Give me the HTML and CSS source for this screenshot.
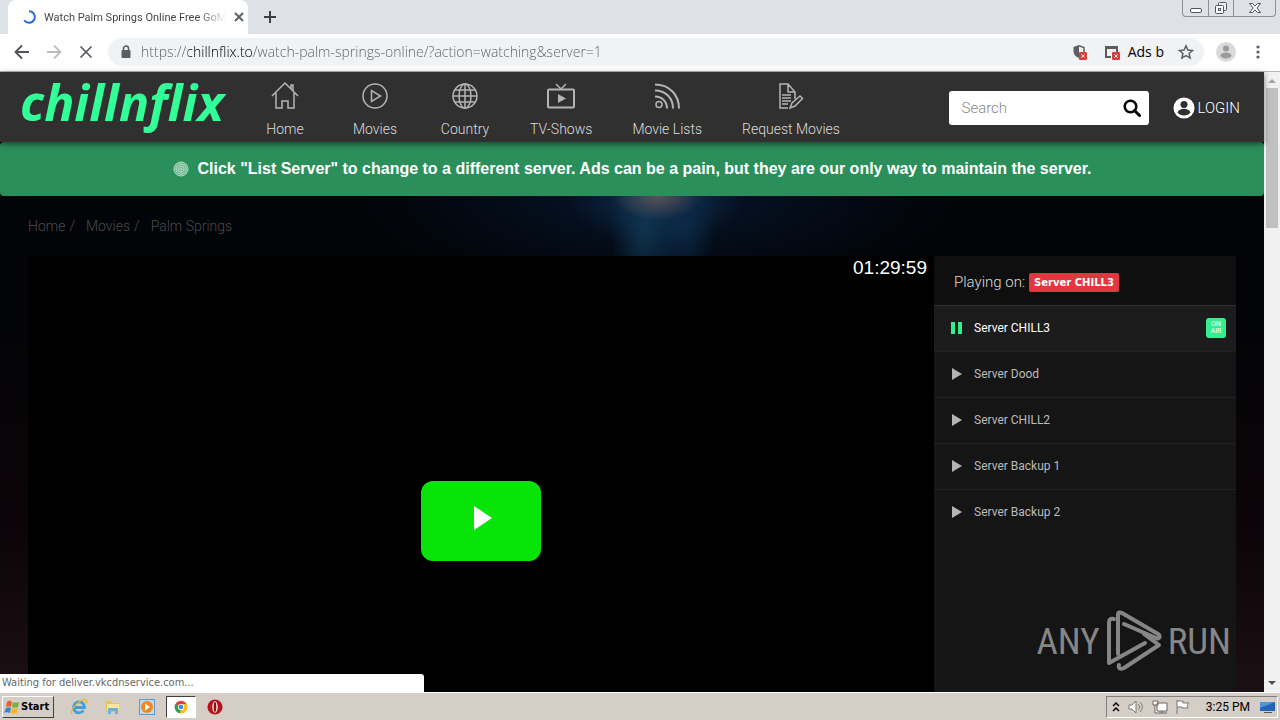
FILE: index.html
```html
<!DOCTYPE html>
<html lang="en">
<head>
  <meta charset="UTF-8" />
  <meta name="viewport" content="width=device-width, initial-scale=1.0"/>
  <title>Watch Palm Springs Online Free</title>
  <link rel="stylesheet" href="styles.css">
</head>
<body>

  <!-- browser tabs -->
  <div class="tabstrip">
    <div class="tab">
      <svg class="spinner" viewBox="0 0 14 14" width="14" height="14"><path d="M7 1.2A5.8 5.8 0 1 1 2.2 10.3" fill="none" stroke="#2b6de0" stroke-width="2"/></svg>
      <span class="tab-title">Watch Palm Springs Online Free GoM</span>
      <button class="icon-btn" aria-label="Close tab"><svg viewBox="0 0 10 10" width="10" height="10"><path d="M1 1l8 8M9 1l-8 8" stroke="#5f6368" stroke-width="2"/></svg></button>
    </div>
    <button class="icon-btn new-tab" aria-label="New tab"><svg viewBox="0 0 12 12" width="12" height="12"><path d="M6 0v12M0 6h12" stroke="#3c4043" stroke-width="2"/></svg></button>
    <div class="window-controls">
      <button aria-label="Minimize"><svg viewBox="0 0 14 14" width="14" height="14"><rect x="1.5" y="7.5" width="11" height="4" rx="1.5" fill="#fff" stroke="#50555e"/></svg></button>
      <button aria-label="Restore"><svg viewBox="0 0 14 14" width="14" height="14"><rect x="4.5" y="1.5" width="8" height="8" rx="1" fill="#eee" stroke="#50555e"/><rect x="1.5" y="4.5" width="8" height="8" rx="1" fill="#fff" stroke="#50555e"/><rect x="4.5" y="7.5" width="2" height="2" fill="none" stroke="#50555e"/></svg></button>
      <button class="wide" aria-label="Close"><svg viewBox="0 0 14 14" width="14" height="14"><path d="M1.5 2.500h3L7 5l2.500-2.500h3L9 7l3.500 4.500h-3L7 9l-2.500 2.500h-3L5 7z" fill="#fff" stroke="#50555e"/></svg></button>
    </div>
  </div>

  <!-- address bar -->
  <div class="toolbar">
    <button class="icon-btn" aria-label="Back"><svg viewBox="0 0 16 16" width="16" height="16"><path d="M15 8H2M8 1.500L1.500 8 8 14.500" fill="none" stroke="#50545a" stroke-width="1.800"/></svg></button>
    <button class="icon-btn" aria-label="Forward"><svg viewBox="0 0 16 16" width="16" height="16"><path d="M1 8h13M8 1.500L14.500 8 8 14.500" fill="none" stroke="#bcbec1" stroke-width="1.800"/></svg></button>
    <button class="icon-btn" aria-label="Stop"><svg viewBox="0 0 16 16" width="16" height="16"><path d="M2.500 2.500l11 11M13.500 2.500l-11 11" stroke="#50545a" stroke-width="1.600"/></svg></button>
    <div class="omnibox">
      <svg viewBox="0 0 10 13" width="10" height="13"><rect x="0.500" y="5" width="9" height="8" rx="1" fill="#5a5e63"/><path d="M2.500 5.500V3.500a2.500 2.500 0 0 1 5 0v2" fill="none" stroke="#5a5e63" stroke-width="1.500"/></svg>
      <input class="url" type="text" aria-label="Address" value="https://chillnflix.to/watch-palm-springs-online/?action=watching&amp;server=1">
      <svg viewBox="0 0 16 16" width="16" height="16"><path d="M7 1L1.500 3v4c0 3.500 2.500 6 5.500 7z" fill="#5a5e63"/><path d="M7 1.800L12 3.500V8" fill="none" stroke="#5a5e63" stroke-width="1.500"/><rect x="7" y="8" width="8" height="8" rx="1" fill="#d93f3a"/><path d="M9.500 10.500l3 3M12.500 10.500l-3 3" stroke="#fff"/></svg>
      <svg class="popup-icon" viewBox="0 0 16 16" width="16" height="16"><path d="M7 13H2V3h11v5" fill="none" stroke="#5a5e63" stroke-width="2"/><path d="M1 2h13v3H1z" fill="#5a5e63"/><rect x="8" y="8" width="8" height="8" rx="1" fill="#d93f3a"/><path d="M10.500 10.500l3 3M13.500 10.500l-3 3" stroke="#fff"/></svg>
      <span class="ads">Ads b</span>
      <button class="icon-btn" aria-label="Bookmark"><svg viewBox="0 0 16 16" width="16" height="16"><path d="M8 1.800l1.900 4.200 4.600.5-3.400 3 1 4.600L8 11.700l-4.100 2.400 1-4.600-3.400-3L6.100 6z" fill="none" stroke="#5a5e63" stroke-width="1.500"/></svg></button>
    </div>
    <button class="icon-btn" aria-label="Profile"><svg viewBox="0 0 20 20" width="20" height="20"><circle cx="10" cy="10" r="10" fill="#dadada"/><circle cx="10" cy="6.500" r="3" fill="#9a9a9a"/><ellipse cx="10" cy="13.500" rx="5.500" ry="3" fill="#9a9a9a"/></svg></button>
    <button class="icon-btn menu" aria-label="Menu"><svg viewBox="0 0 4 14" width="4" height="14" fill="#5a5e63"><circle cx="2" cy="2" r="1.600"/><circle cx="2" cy="7" r="1.600"/><circle cx="2" cy="12" r="1.600"/></svg></button>
  </div>

  <div class="viewport">
    <div class="page">
      <header>
        <a class="logo" href="#">chillnflix</a>
        <nav>
          <a href="#">
            <svg viewBox="0 0 28 28" width="28" height="28"><path d="M1 15L14 2l13 13M5 12v15h6v-7h6v7h6V12M20 8V4h2v6"/></svg>
            <span>Home</span>
          </a>
          <a href="#">
            <svg viewBox="0 0 28 28" width="28" height="28"><circle cx="14" cy="15" r="12"/><path d="M10.500 9.500v11l9-5.500z"/></svg>
            <span>Movies</span>
          </a>
          <a href="#">
            <svg viewBox="0 0 28 28" width="28" height="28"><circle cx="14" cy="15" r="12"/><ellipse cx="14" cy="15" rx="6" ry="12"/><path d="M14 3v24M2 15h24M4 9h20M4 21h20"/></svg>
            <span>Country</span>
          </a>
          <a href="#">
            <svg viewBox="0 0 28 28" width="28" height="28"><rect x="1" y="8.500" width="26" height="18" rx="1" stroke-width="2"/><path d="M14 8L9 3M14 8l5-5"/><path class="solid" d="M11 13v9l8-4.500z"/></svg>
            <span>TV-Shows</span>
          </a>
          <a href="#">
            <svg viewBox="0 0 28 28" width="28" height="28"><circle cx="6" cy="23.500" r="3"/><path d="M2 15.500c7 0 12 5 12 12M2 9.500c10.500 0 18 7.500 18 18M2 3.500c14 0 24 10 24 24" stroke-width="2"/></svg>
            <span>Movie Lists</span>
          </a>
          <a href="#">
            <svg viewBox="0 0 28 28" width="28" height="28"><path d="M11 27H3V3h8l7 8v7M11 3v8h7M5 14h9M5 17h9M5 20h9M5 23h6M13 27l2-5 8-7 2.500 2.500-7.500 7.500z"/></svg>
            <span>Request Movies</span>
          </a>
        </nav>
        <form class="search">
          <input type="search" placeholder="Search" aria-label="Search">
          <button type="button" aria-label="Search"><svg viewBox="0 0 18 18" width="18" height="18"><circle cx="7.500" cy="7.500" r="5.800" fill="none" stroke="#000" stroke-width="2.500"/><path d="M11.500 11.500l5 5" stroke="#000" stroke-width="3" stroke-linecap="round"/></svg></button>
        </form>
        <a class="login" href="#">
          <svg viewBox="0 0 22 22" width="22" height="22"><circle cx="11" cy="11" r="10.500" fill="#fff"/><circle cx="11" cy="7.500" r="3.500" fill="#303030"/><path d="M4.500 15.500c2-5 11-5 13 0-3 4-10 4-13 0z" fill="#303030"/></svg>
          <span>LOGIN</span>
        </a>
      </header>

      <div class="notice">
        <svg viewBox="0 0 16 16" width="16" height="16" fill="#6db590" stroke="#b3dec5"><circle cx="8" cy="8" r="7"/><circle cx="8" cy="8" r="5"/><circle cx="8" cy="8" r="3"/><circle cx="8" cy="8" r="1"/></svg>
        <span>Click "List Server" to change to a different server. Ads can be a pain, but they are our only way to maintain the server.</span>
      </div>

      <div class="content">
        <div class="breadcrumb">
          <a href="#">Home</a><span>/</span>
          <a href="#">Movies</a><span>/</span>
          <a href="#">Palm Springs</a>
        </div>

        <main>
          <div class="player">
            <span class="time">01:29:59</span>
            <button class="play" aria-label="Play"><svg viewBox="0 0 20 24" width="20" height="24"><path d="M1 0v24l18-12z" fill="#fff"/></svg></button>
          </div>

          <aside>
            <div class="playing">Playing on: <span class="badge">Server CHILL3</span></div>
            <ul class="servers">
              <li class="active">
                <a href="#"><svg viewBox="0 0 12 12" width="12" height="12"><path d="M0 0h4v12H0zM7 0h4v12H7z"/></svg><span>Server CHILL3</span></a>
                <span class="on-air">ON<br>AIR</span>
              </li>
              <li><a href="#"><svg viewBox="0 0 12 12" width="12" height="12"><path d="M1 0v12l10-6z"/></svg><span>Server Dood</span></a></li>
              <li><a href="#"><svg viewBox="0 0 12 12" width="12" height="12"><path d="M1 0v12l10-6z"/></svg><span>Server CHILL2</span></a></li>
              <li><a href="#"><svg viewBox="0 0 12 12" width="12" height="12"><path d="M1 0v12l10-6z"/></svg><span>Server Backup 1</span></a></li>
              <li><a href="#"><svg viewBox="0 0 12 12" width="12" height="12"><path d="M1 0v12l10-6z"/></svg><span>Server Backup 2</span></a></li>
            </ul>
          </aside>
        </main>
      </div>
    </div>

    <div class="scrollbar">
      <svg viewBox="0 0 16 16" width="16" height="16"><path d="M4 11l4-4 4 4z" fill="#a3a3a3"/></svg>
      <div class="thumb"></div>
      <svg class="down" viewBox="0 0 16 16" width="16" height="16"><path d="M4 5l4 4 4-4z" fill="#505050"/></svg>
    </div>

    <div class="status">Waiting for deliver.vkcdnservice.com...</div>

    <div class="watermark">
      <span>ANY</span>
      <svg viewBox="0 0 56 62" width="56" height="62" fill="none" stroke="#868686" stroke-width="4" stroke-linejoin="round" stroke-linecap="round"><path d="M12 44V5c0-3 2-3 4-2l36 21c3 2 1 6-2 4L18 14"/><path d="M8 9c-4-1-5 1-5 4v40l36-20"/><path d="M38 24l15 11L18 58c-4 2-6 0-5-3"/></svg>
      <span>RUN</span>
    </div>
  </div>

  <!-- taskbar -->
  <footer class="taskbar">
    <button class="start">
      <svg viewBox="0 0 16 16" width="16" height="16"><path d="M3 3c2-2 4-1 5 0L7 8C5 7 4 7 2 8z" fill="#e8612c"/><path d="M9 3c2 1 4 1 6 0l-1 5c-2 1-4 1-6 0z" fill="#76b041"/><path d="M2 9c2-1 3-1 5 0l-1 5c-2-1-4-1-6 0z" fill="#3c86d8"/><path d="M8 9c2 1 4 1 6 0l-1 5c-2 1-4 1-6 0z" fill="#f6b81c"/></svg>
      <span>Start</span>
    </button>
    <button class="task" aria-label="Internet Explorer"><svg viewBox="0 0 18 18" width="18" height="18"><path d="M13.500 12.500A5.500 5.500 0 1 1 14.500 9.500H5" fill="none" stroke="#3ba0e2" stroke-width="2.800"/><path d="M2 16C-1 11 12 0 16 2c1 .5 1 2 0 3" fill="none" stroke="#e8b730" stroke-width="1.300"/></svg></button>
    <button class="task" aria-label="Explorer"><svg viewBox="0 0 18 18" width="18" height="18"><path d="M2 3h5l1 2h7v9H2z" fill="#e8c35c"/><path d="M3 6h12v7H3z" fill="#f8e6a0"/><path d="M4 16v-6h10v6h-3v-3H7v3z" fill="#68b2dc"/></svg></button>
    <button class="task" aria-label="Media Player"><svg viewBox="0 0 18 18" width="18" height="18"><rect x="1.500" y="1.500" width="15" height="15" fill="#b9dcf4" stroke="#5b9bce"/><circle cx="9" cy="9" r="6" fill="#f08a1c"/><path d="M7 5.500v7l5-3.500z" fill="#fff"/></svg></button>
    <button class="task running" aria-label="Chrome"><svg viewBox="0 0 18 18" width="14" height="14"><circle cx="9" cy="9" r="8" fill="#e34133"/><path d="M9 9L2 5a8 8 0 0 0 6 12z" fill="#2ba24c"/><path d="M9 9h8a8 8 0 0 1-9 8z" fill="#fbc116"/><path d="M9 5h7a8 8 0 0 1-8 12l4-6z" fill="#fbc116"/><circle cx="9" cy="9" r="4" fill="#fff"/><circle cx="9" cy="9" r="3" fill="#4285f4"/></svg></button>
    <button class="task" aria-label="Opera"><svg viewBox="0 0 18 18" width="16" height="16"><circle cx="9" cy="9" r="8.500" fill="#b5161c"/><ellipse cx="9" cy="9" rx="3" ry="6.500" fill="#fff"/><ellipse cx="9" cy="9" rx="1.500" ry="5.500" fill="#8a1015"/></svg></button>
    <div class="tray">
      <svg viewBox="0 0 8 12" width="8" height="12" fill="none" stroke="#000" stroke-width="1.500"><path d="M1 5l3-3 3 3M1 10l3-3 3 3"/></svg>
      <svg viewBox="0 0 18 16" width="18" height="16" fill="#fff" stroke="#777"><path d="M2 6h3l4-4v12l-4-4H2z"/><path d="M11 5c2 2 2 4 0 6M13 3c3 3 3 7 0 10" fill="none"/></svg>
      <svg viewBox="0 0 16 16" width="16" height="16" fill="#fff" stroke="#666"><path d="M5 4h10v8H5zM7 14h8M10 12v2M1 2h5v4H1zM3 6v8h4"/></svg>
      <svg viewBox="0 0 16 16" width="16" height="16" fill="#fff" stroke="#777"><path d="M2 1v14M2 2h6v2h6l-2 3 1 2H7V8H2"/></svg>
      <span class="clock">3:25 PM</span>
      <svg viewBox="0 0 16 16" width="16" height="16"><path d="M1 3h15v9H1z" fill="#2464b8"/><path d="M1 3h15L1 9z" fill="#4d94dd"/><path d="M5 13h8v1H5z" fill="#555"/></svg>
    </div>
  </footer>

</body>
</html>
```
FILE: styles.css
```css
* {
  box-sizing: border-box;
}
body {
  margin: 0;
  height: 100vh;
  display: flex;
  flex-direction: column;
  overflow: hidden;
  font-family: Roboto, "Liberation Sans", sans-serif;
  font-size: 14px;
}
a {
  color: inherit;
  text-decoration: none;
}
svg {
  display: block;
  flex: none;
}
button {
  font: inherit;
  padding: 0;
  border: none;
  background: none;
}
.icon-btn {
  display: flex;
  align-items: center;
}

/* browser */
.tabstrip {
  display: flex;
  height: 34px;
  padding-left: 8px;
  background: #dee1e6;
}
.tab {
  display: flex;
  align-items: center;
  gap: 8px;
  width: 240px;
  padding: 0 11px 0 14px;
  background: #fff;
  border-radius: 8px 8px 0 0;
}
.tab-title {
  flex: 1;
  white-space: nowrap;
  font-size: 11px;
  color: transparent;
  background: linear-gradient(to right, #3c4043 85%, #fff);
  -webkit-background-clip: text;
  background-clip: text;
}
.new-tab {
  margin-left: 16px;
}
.window-controls {
  display: flex;
  height: 17px;
  margin: 0 4px 0 auto;
  border: 1px solid #8b9099;
  border-top: none;
  border-radius: 0 0 4px 4px;
}
.window-controls button {
  display: flex;
  align-items: center;
  justify-content: center;
  width: 25px;
}
.window-controls button + button {
  border-left: 1px solid #8b9099;
}
.window-controls .wide {
  width: 42px;
}
.toolbar {
  display: flex;
  align-items: center;
  gap: 16px;
  height: 38px;
  padding: 0 20px 2px 14px;
  background: #fff;
  border-bottom: 1px solid #b5b5b5;
}
.omnibox {
  display: flex;
  flex: 1;
  align-items: center;
  height: 28px;
  margin: 0 -4px 0 -2px;
  padding: 0 10px 0 13px;
  border-radius: 14px;
  background: #f0f2f4;
}
.url {
  flex: 1;
  margin-left: 10px;
  padding: 0;
  border: none;
  outline: none;
  font-family: "Open Sans", sans-serif;
  font-weight: 300;
  font-size: 14px;
  color: transparent;
  background: linear-gradient(to right, #5a5e63 47px, #000 47px, #000 112px, #5a5e63 112px);
  -webkit-background-clip: text;
  background-clip: text;
}
.popup-icon {
  margin-left: 16px;
}
.ads {
  margin: 0 14px 0 8px;
  font-family: "Open Sans", sans-serif;
}
.menu {
  margin-left: 4px;
}

/* site */
.viewport {
  position: relative;
  display: flex;
  flex: 1;
  min-height: 0;
}
.page {
  display: flex;
  flex: 1;
  flex-direction: column;
  min-width: 0;
  background: #020407;
}
header {
  position: relative;
  display: flex;
  align-items: center;
  height: 70px;
  padding: 0 24px 0 20px;
  background: #303030;
  color: #fff;
  box-shadow: 0 2px 6px rgba(0,0,0,0.5);
}
.logo {
  width: 240px;
  padding-bottom: 10px;
  line-height: 60px;
  color: #33ff99;
  font-family: "Open Sans", sans-serif;
  font-size: 50px;
  font-weight: bold;
  font-style: italic;
}
nav {
  display: flex;
  gap: 40px;
  padding-top: 3px;
}
nav a {
  display: flex;
  flex-direction: column;
  align-items: center;
  gap: 12px;
  min-width: 50px;
  line-height: 16px;
  font-weight: 300;
  font-size: 14px;
  color: #ddd;
  white-space: nowrap;
}
nav svg {
  fill: none;
  stroke: #b4b4b4;
  stroke-width: 1.5;
}
nav .solid {
  fill: #b4b4b4;
  stroke: none;
}
.search {
  display: flex;
  align-items: center;
  width: 200px;
  height: 34px;
  margin: 2px 0 0 auto;
  padding: 0 8px 0 12px;
  border-radius: 3px;
  background: #fff;
}
.search input {
  flex: 1;
  min-width: 0;
  padding: 0;
  border: none;
  outline: none;
  font: 300 15px Roboto, sans-serif;
}
.search input::placeholder {
  color: #888;
}
.login {
  display: flex;
  align-items: center;
  gap: 2px;
  margin: 2px 0 0 24px;
  font-weight: 300;
  font-size: 15px;
}
.notice {
  display: flex;
  align-items: center;
  justify-content: center;
  gap: 9px;
  height: 54px;
  border-radius: 4px;
  background: #2b8f5c;
  color: #fff;
  font-family: "Liberation Sans", sans-serif;
  font-weight: bold;
  font-size: 16px;
}
.content {
  display: flex;
  flex: 1;
  flex-direction: column;
  padding: 0 28px;
  background:
    radial-gradient(ellipse 44px 24px at 52% 0, #5b5158, transparent),
    radial-gradient(ellipse 34px 100px at 51% 24px, #0f3450, transparent),
    radial-gradient(ellipse 34px 70px at 54% 24px, #0c2a48, transparent),
    radial-gradient(ellipse 90px 50px at 52% 0, #0f3050, transparent),
    radial-gradient(ellipse 300px 100px at 52% 0, #06142a, transparent),
    linear-gradient(to bottom, transparent 100px, #0c0408 330px, #1b1014);
}
.breadcrumb {
  display: flex;
  align-items: center;
  gap: 4px;
  height: 60px;
  font-weight: 300;
  font-size: 14px;
  color: #4c4c4c;
}
.breadcrumb span {
  margin-right: 7px;
}
main {
  display: flex;
  flex: 1;
}
.player {
  position: relative;
  display: flex;
  flex: 3;
  align-items: center;
  justify-content: center;
  padding-top: 94px;
  background: #000;
}
.time {
  position: absolute;
  top: 0;
  right: 7px;
  line-height: 24px;
  font-family: "Liberation Sans", sans-serif;
  font-size: 19px;
  color: #fff;
}
.play {
  display: flex;
  justify-content: center;
  width: 120px;
  height: 80px;
  padding: 25px 0 0 4px;
  border-radius: 12px;
  background: #08e408;
}
aside {
  flex: 1;
  background: #151515;
}
.playing {
  display: flex;
  align-items: center;
  gap: 4px;
  height: 49px;
  padding: 3px 20px 0;
  background: #0f0f0f;
  color: #ddd;
  font-weight: 300;
  font-size: 15px;
}
.badge {
  padding: 0 5px;
  border-radius: 2px;
  background: #e0383e;
  color: #fff;
  font-family: "DejaVu Sans", sans-serif;
  font-weight: bold;
  font-size: 10px;
  line-height: 19px;
}
.servers {
  margin: 0;
  padding: 0;
  list-style-type: none;
}
.servers li {
  display: flex;
  align-items: center;
  justify-content: space-between;
  height: 46px;
  padding: 0 10px 2px 17px;
  border-top: 1px solid #222;
  color: #bbb;
  font-size: 12px;
}
.servers a {
  display: flex;
  align-items: center;
  gap: 11px;
}
.servers svg {
  fill: #b4b4b4;
}
.servers .active {
  background: #1c1c1c;
  border-color: #303030;
  color: #fff;
}
.servers .active svg {
  fill: #33ee91;
}
.on-air {
  width: 20px;
  height: 20px;
  padding-top: 3px;
  border-radius: 3px;
  background: #33ee91;
  color: #fff;
  font-size: 7px;
  line-height: 7px;
  text-align: center;
}
.scrollbar {
  display: flex;
  flex-direction: column;
  width: 16px;
  background: #f1f1f1;
}
.thumb {
  height: 140px;
  margin: 0 2px;
  background: #c1c1c1;
}
.down {
  margin-top: auto;
}
.status {
  position: absolute;
  left: 0;
  bottom: 0;
  width: 424px;
  padding-left: 2px;
  border-top-right-radius: 3px;
  background: #fff;
  color: #686868;
  font-family: "DejaVu Sans Condensed", "DejaVu Sans", sans-serif;
  font-size: 11px;
  line-height: 18px;
}
.watermark {
  position: absolute;
  right: 49px;
  bottom: 20px;
  display: flex;
  align-items: center;
  gap: 6px;
  color: #868686;
  font-family: "Roboto Condensed", "Liberation Sans Narrow", Roboto, sans-serif;
  font-size: 37px;
}

/* taskbar */
.taskbar {
  display: flex;
  align-items: center;
  height: 28px;
  border-top: 1px solid #fff;
  padding: 0 2px;
  background: #d5cec6;
  color: #000;
  font-family: "DejaVu Sans Condensed", "DejaVu Sans", sans-serif;
  font-size: 11px;
}
.start {
  display: flex;
  align-items: center;
  gap: 1px;
  width: 52px;
  height: 22px;
  margin-right: 10px;
  padding-left: 1px;
  border: 1px solid;
  border-color: #fff #404040 #404040 #fff;
  font-weight: bold;
}
.task {
  display: flex;
  align-items: center;
  justify-content: center;
  width: 30px;
  height: 22px;
  margin-right: 4px;
}
.running {
  border: 1px solid;
  border-color: #404040 #fff #fff #404040;
  background: #fff;
}
.tray {
  display: flex;
  align-items: center;
  gap: 7px;
  height: 22px;
  margin-left: auto;
  padding: 0 2px 0 5px;
  border: 1px solid;
  border-color: #808080 #fff #fff #808080;
}
.clock {
  margin: 0 2px 0 8px;
  font-family: Roboto, sans-serif;
  font-size: 12px;
}
```
